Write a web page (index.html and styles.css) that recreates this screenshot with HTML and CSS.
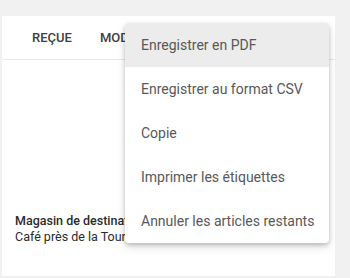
FILE: index.html
```html
<!DOCTYPE html>
<html lang="fr">
<head>
  <meta charset="UTF-8">
  <title>Commande</title>
  <link rel="stylesheet" href="styles.css">
</head>
<body>
  <div class="carte">
    <div class="onglets">
      <span class="onglet">REÇUE</span>
      <span class="onglet">MODIFIÉE</span>
    </div>
    <div class="contenu">
      <div class="magasin">Magasin de destination</div>
      <div class="adresse">Café près de la Tour Eiffel</div>
    </div>
    <ul class="menu">
      <li class="actif">Enregistrer en PDF</li>
      <li>Enregistrer au format CSV</li>
      <li>Copie</li>
      <li>Imprimer les étiquettes</li>
      <li>Annuler les articles restants</li>
    </ul>
  </div>
</body>
</html>
```

FILE: styles.css
```css
body {
  margin: 0;
  background: #f1f1f1;
  font-family: Roboto, Arial, sans-serif;
  color: #3c4043;
}
.carte {
  position: relative;
  margin: 16px 15px 0 2px;
  height: 260px;
  background: #fff;
  display: flex;
  flex-direction: column;
}
.onglets {
  display: flex;
  align-items: center;
  height: 43px;
  padding-left: 16px;
  border-bottom: 1px solid #e8e8e8;
  overflow: hidden;
}
.onglet {
  padding: 0 14px;
  font-size: 13px;
  font-weight: 500;
  color: #3c4043;
  white-space: nowrap;
}
.contenu {
  flex: 1;
  display: flex;
  flex-direction: column;
  justify-content: flex-end;
  padding: 0 13px 31px;
  font-size: 12.5px;
  line-height: 16px;
  color: #2b2b2b;
}
.magasin {
  font-weight: 500;
}
.menu {
  position: absolute;
  top: 7px;
  left: 123px;
  width: 204px;
  margin: 0;
  padding: 0;
  list-style: none;
  background: #fff;
  border-radius: 4px;
  box-shadow: 0 2px 4px rgba(0,0,0,0.2), 0 4px 10px rgba(0,0,0,0.12);
  overflow: hidden;
}
.menu li {
  height: 44px;
  line-height: 44px;
  padding-left: 16px;
  font-size: 14px;
  color: #585858;
  white-space: nowrap;
}
.menu li.actif {
  background: #ececec;
}
```
